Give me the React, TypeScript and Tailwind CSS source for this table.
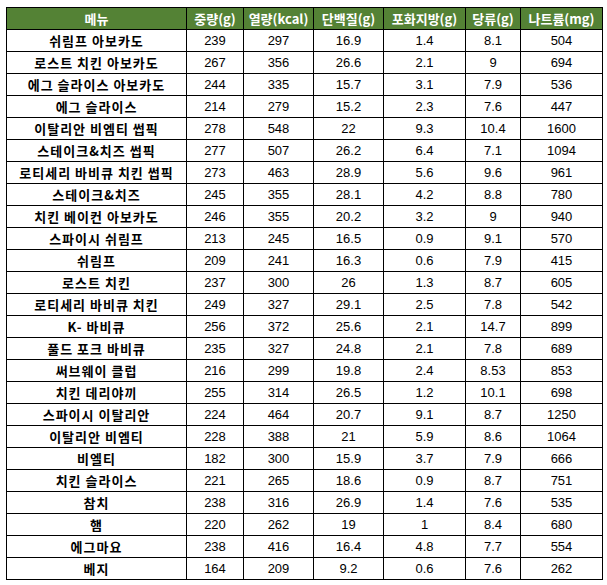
const headers = ['메뉴', '중량(g)', '열량(kcal)', '단백질(g)', '포화지방(g)', '당류(g)', '나트륨(mg)'];

const widths = ['w-[180px]', 'w-[57px]', 'w-[70px]', 'w-[70px]', 'w-[82px]', 'w-[55px]', 'w-[82px]'];

const rows: (string | number)[][] = [
  ['쉬림프 아보카도', 239, 297, 16.9, 1.4, 8.1, 504],
  ['로스트 치킨 아보카도', 267, 356, 26.6, 2.1, 9, 694],
  ['에그 슬라이스 아보카도', 244, 335, 15.7, 3.1, 7.9, 536],
  ['에그 슬라이스', 214, 279, 15.2, 2.3, 7.6, 447],
  ['이탈리안 비엠티 썹픽', 278, 548, 22, 9.3, 10.4, 1600],
  ['스테이크&치즈 썹픽', 277, 507, 26.2, 6.4, 7.1, 1094],
  ['로티세리 바비큐 치킨 썹픽', 273, 463, 28.9, 5.6, 9.6, 961],
  ['스테이크&치즈', 245, 355, 28.1, 4.2, 8.8, 780],
  ['치킨 베이컨 아보카도', 246, 355, 20.2, 3.2, 9, 940],
  ['스파이시 쉬림프', 213, 245, 16.5, 0.9, 9.1, 570],
  ['쉬림프', 209, 241, 16.3, 0.6, 7.9, 415],
  ['로스트 치킨', 237, 300, 26, 1.3, 8.7, 605],
  ['로티세리 바비큐 치킨', 249, 327, 29.1, 2.5, 7.8, 542],
  ['K- 바비큐', 256, 372, 25.6, 2.1, 14.7, 899],
  ['풀드 포크 바비큐', 235, 327, 24.8, 2.1, 7.8, 689],
  ['써브웨이 클럽', 216, 299, 19.8, 2.4, 8.53, 853],
  ['치킨 데리야끼', 255, 314, 26.5, 1.2, 10.1, 698],
  ['스파이시 이탈리안', 224, 464, 20.7, 9.1, 8.7, 1250],
  ['이탈리안 비엠티', 228, 388, 21, 5.9, 8.6, 1064],
  ['비엘티', 182, 300, 15.9, 3.7, 7.9, 666],
  ['치킨 슬라이스', 221, 265, 18.6, 0.9, 8.7, 751],
  ['참치', 238, 316, 26.9, 1.4, 7.6, 535],
  ['햄', 220, 262, 19, 1, 8.4, 680],
  ['에그마요', 238, 416, 16.4, 4.8, 7.7, 554],
  ['베지', 164, 209, 9.2, 0.6, 7.6, 262],
];

export default function App() {
  return (
    <div className="w-[607px] h-[585px] bg-white pl-[6px] pt-[7px]">
      <div className="w-[597px] border-l border-t border-black">
        {/* Header */}
        <div className="flex bg-[#548235]">
          {headers.map((h, i) => (
            <div
              key={h}
              className={`${widths[i]} h-[22px] border-r border-b border-black flex items-center justify-center text-white font-bold text-[13px] font-['Noto_Sans_CJK_KR','Liberation_Sans',sans-serif] leading-none`}
            >
              {h}
            </div>
          ))}
        </div>

        {/* Rows */}
        {rows.map((r) => (
          <div key={r[0] as string} className="flex">
            {r.map((v, i) => (
              <div
                key={i}
                className={`${widths[i]} h-[22px] border-r border-b border-black flex items-center justify-center text-black leading-none ${
                  i === 0
                    ? "font-bold text-[13px] tracking-[1px] font-['Noto_Sans_CJK_KR',sans-serif]"
                    : "text-[13px] font-['Liberation_Sans',sans-serif]"
                }`}
              >
                {v}
              </div>
            ))}
          </div>
        ))}
      </div>
    </div>
  );
}
